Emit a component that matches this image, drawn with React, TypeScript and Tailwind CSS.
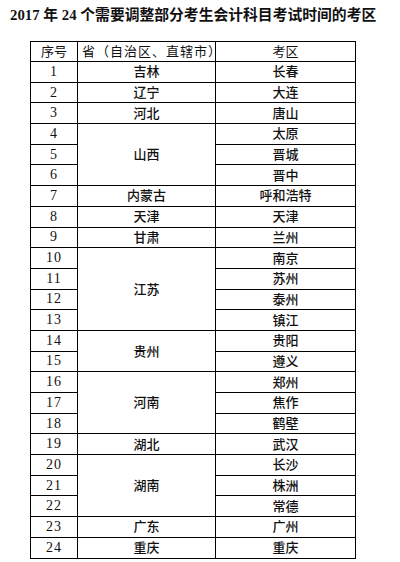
const rows: { no: number; prov?: string; span?: number; city: string }[] = [
  { no: 1, prov: '吉林', city: '长春' },
  { no: 2, prov: '辽宁', city: '大连' },
  { no: 3, prov: '河北', city: '唐山' },
  { no: 4, prov: '山西', span: 3, city: '太原' },
  { no: 5, city: '晋城' },
  { no: 6, city: '晋中' },
  { no: 7, prov: '内蒙古', city: '呼和浩特' },
  { no: 8, prov: '天津', city: '天津' },
  { no: 9, prov: '甘肃', city: '兰州' },
  { no: 10, prov: '江苏', span: 4, city: '南京' },
  { no: 11, city: '苏州' },
  { no: 12, city: '泰州' },
  { no: 13, city: '镇江' },
  { no: 14, prov: '贵州', span: 2, city: '贵阳' },
  { no: 15, city: '遵义' },
  { no: 16, prov: '河南', span: 3, city: '郑州' },
  { no: 17, city: '焦作' },
  { no: 18, city: '鹤壁' },
  { no: 19, prov: '湖北', city: '武汉' },
  { no: 20, prov: '湖南', span: 3, city: '长沙' },
  { no: 21, city: '株洲' },
  { no: 22, city: '常德' },
  { no: 23, prov: '广东', city: '广州' },
  { no: 24, prov: '重庆', city: '重庆' },
];

const serif = "font-['Liberation_Serif','Noto_Sans_CJK_SC',serif]";

export default function App() {
  return (
    <div className={`w-[400px] h-[562px] bg-white text-[#111] ${serif}`}>
      <h1 className="pt-[5px] pl-[10px] text-[14.8px] leading-[20px] font-bold whitespace-nowrap">
        2017 年 24 个需要调整部分考生会计科目考试时间的考区
      </h1>
      <table className="ml-[30px] mt-[16px] w-[325px] border-collapse border border-black text-[13px] table-fixed">
        <colgroup>
          <col className="w-[47px]" />
          <col className="w-[138px]" />
          <col className="w-[140px]" />
        </colgroup>
        <thead>
          <tr className="h-[20px]">
            <th className="border border-black font-normal p-0 leading-none">序号</th>
            <th className="border border-black font-normal p-0 leading-none text-left pl-[4px] whitespace-nowrap tracking-[1px]">
              省（自治区、直辖市）
            </th>
            <th className="border border-black font-normal p-0 leading-none">考区</th>
          </tr>
        </thead>
        <tbody>
          {rows.map((r) => (
            <tr key={r.no} className="h-[20.7px]">
              <td className="border border-black p-0 text-center leading-none text-[14px] tracking-[1px]">{r.no}</td>
              {r.prov && (
                <td rowSpan={r.span ?? 1} className="border border-black p-0 text-center leading-none font-medium">
                  {r.prov}
                </td>
              )}
              <td className="border border-black p-0 text-center leading-none font-medium">{r.city}</td>
            </tr>
          ))}
        </tbody>
      </table>
    </div>
  );
}
